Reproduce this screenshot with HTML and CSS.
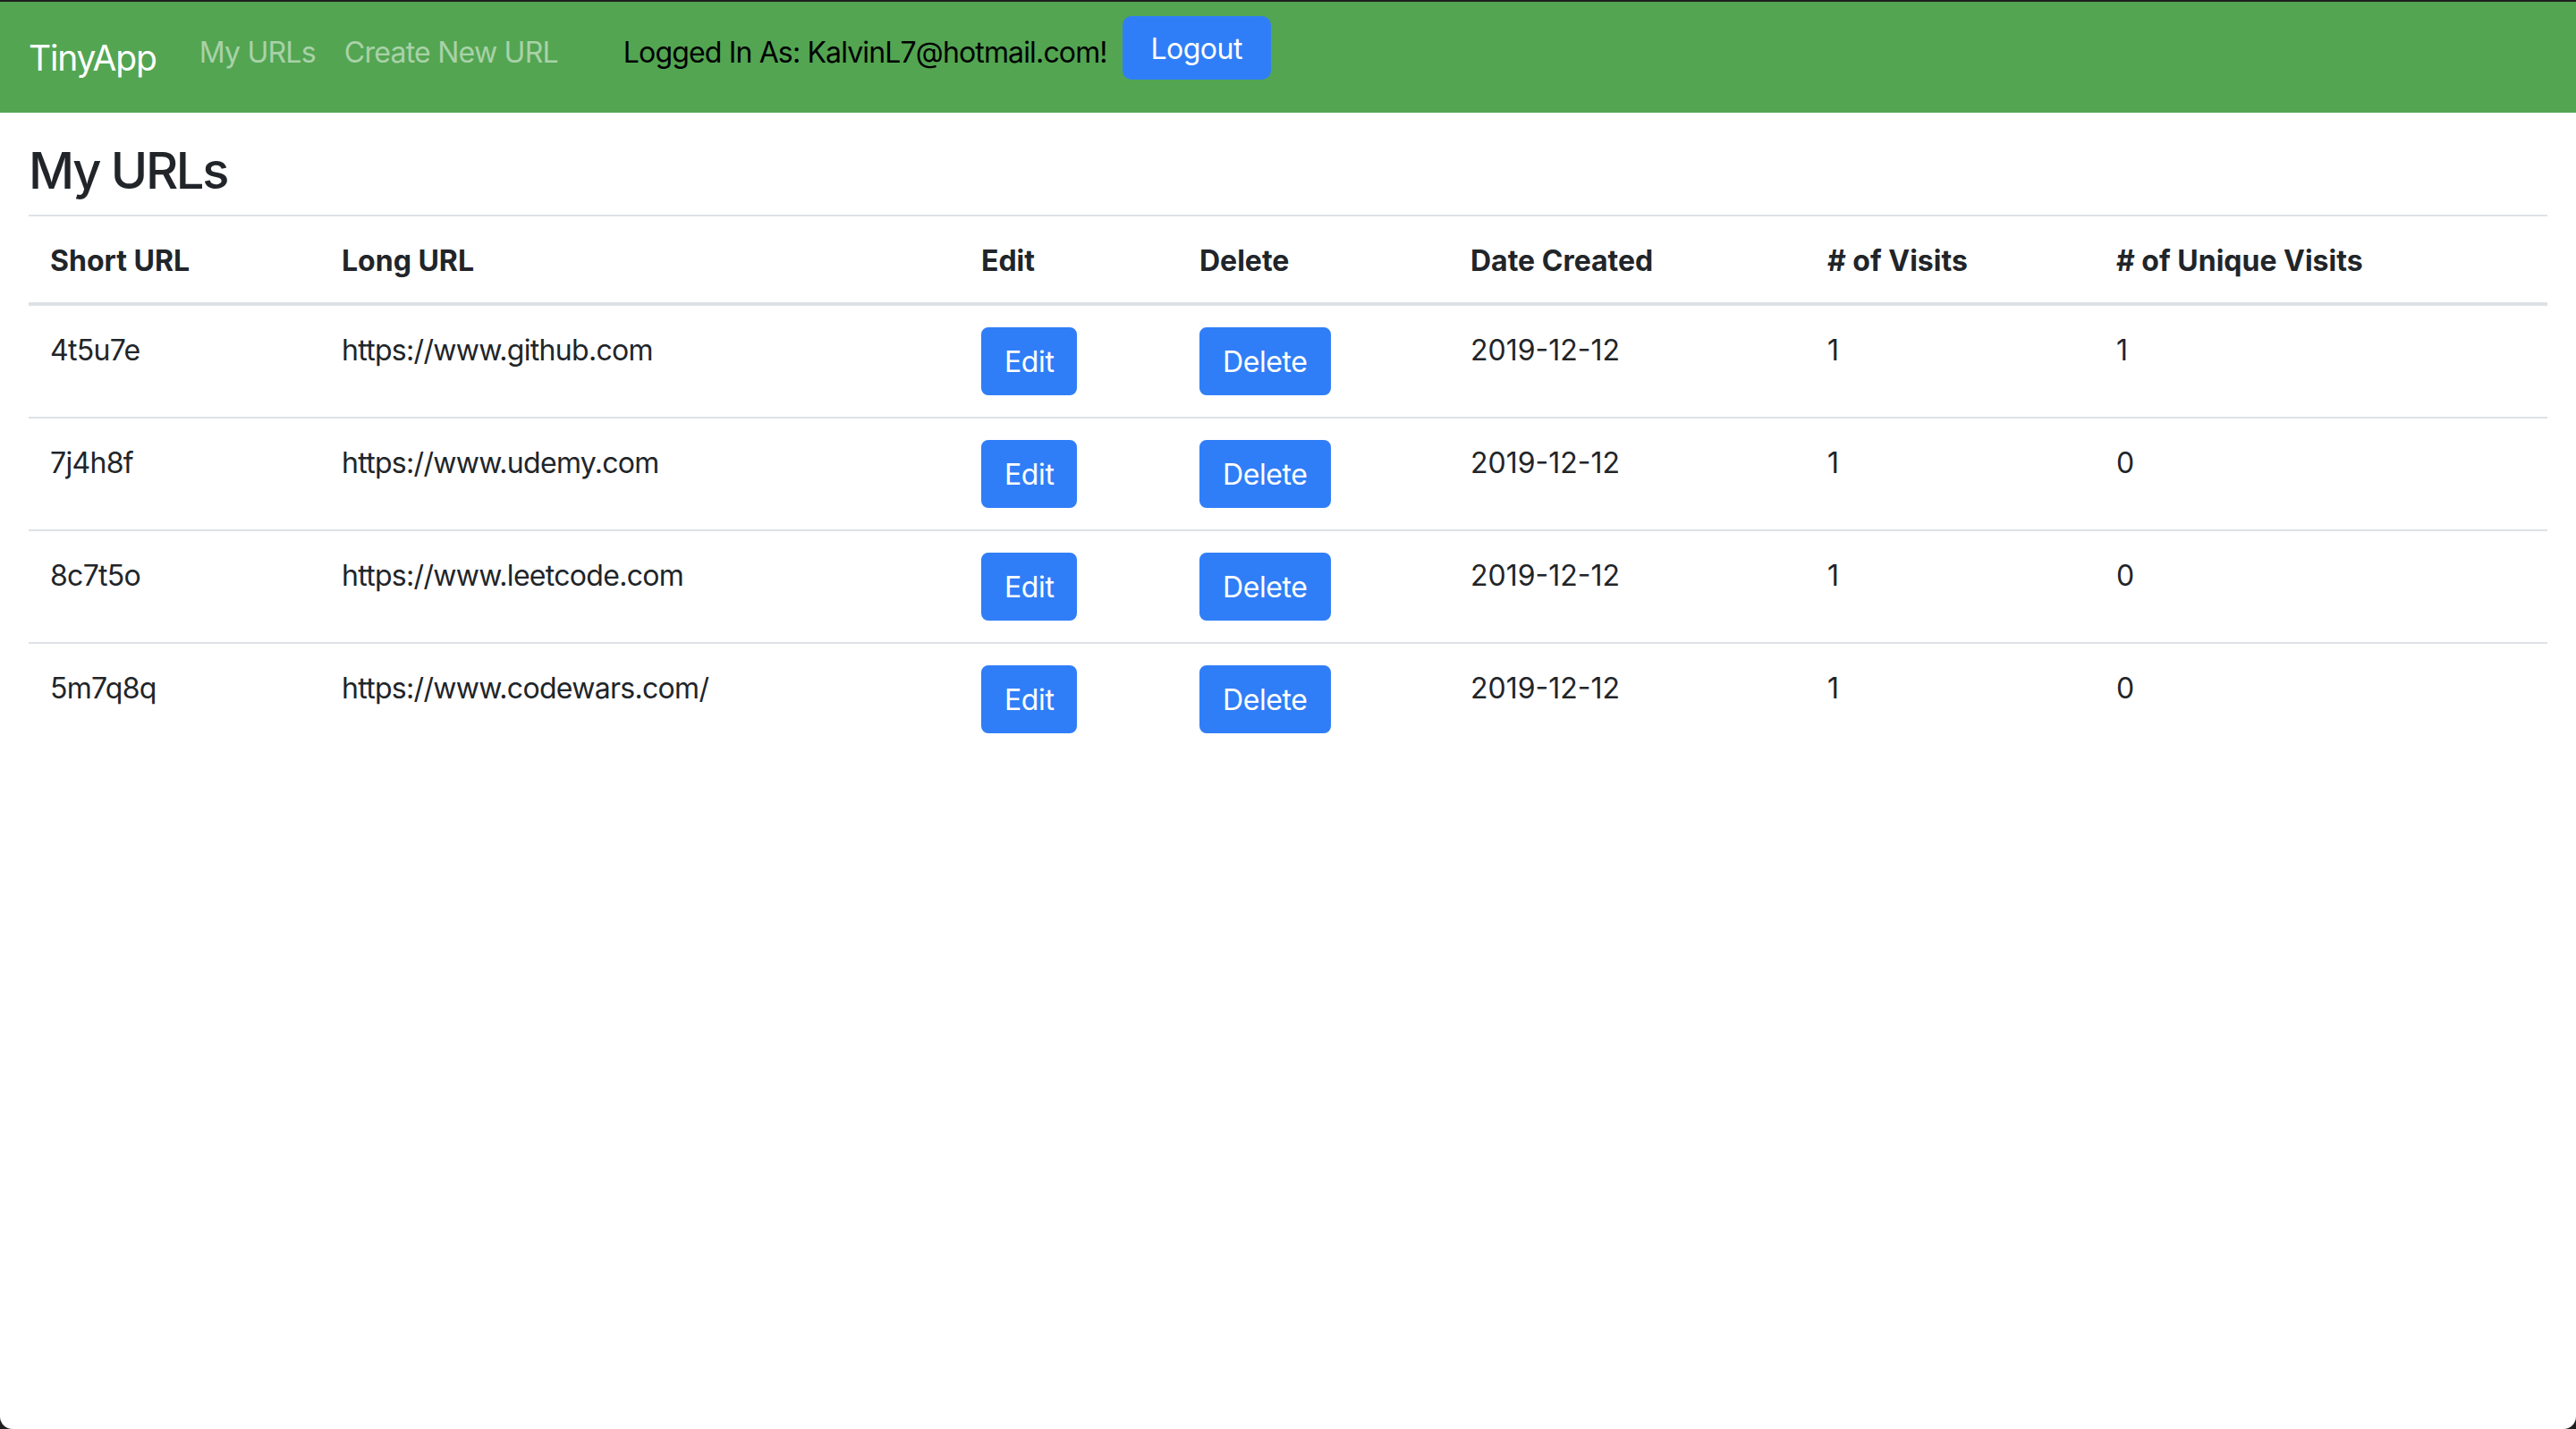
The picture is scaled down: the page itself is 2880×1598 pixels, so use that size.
FILE: index.html
```html
<!DOCTYPE html>
<html lang="en">
<head>
<meta charset="utf-8">
<title>TinyApp</title>
<link rel="stylesheet" href="styles.css">
</head>
<body>
<div class="window">
  <nav class="navbar">
    <a class="brand" href="#">TinyApp</a>
    <a class="nav-link" href="#">My URLs</a>
    <a class="nav-link" href="#">Create New URL</a>
    <span class="logged">Logged In As: KalvinL7@hotmail.com!</span>
    <button class="logout" type="button">Logout</button>
  </nav>
  <main class="container">
    <h3 class="title">My URLs</h3>
    <table class="table">
      <colgroup>
        <col class="c-short">
        <col class="c-long">
        <col class="c-edit">
        <col class="c-delete">
        <col class="c-date">
        <col class="c-visits">
        <col class="c-unique">
      </colgroup>
      <thead>
        <tr>
          <th>Short URL</th>
          <th>Long URL</th>
          <th>Edit</th>
          <th>Delete</th>
          <th>Date Created</th>
          <th># of Visits</th>
          <th># of Unique Visits</th>
        </tr>
      </thead>
      <tbody>
        <tr>
          <td class="txt">4t5u7e</td>
          <td class="txt">https://www.github.com</td>
          <td class="act"><button class="btn" type="button">Edit</button></td>
          <td class="act"><button class="btn" type="button">Delete</button></td>
          <td>2019-12-12</td>
          <td>1</td>
          <td>1</td>
        </tr>
        <tr>
          <td class="txt">7j4h8f</td>
          <td class="txt">https://www.udemy.com</td>
          <td class="act"><button class="btn" type="button">Edit</button></td>
          <td class="act"><button class="btn" type="button">Delete</button></td>
          <td>2019-12-12</td>
          <td>1</td>
          <td>0</td>
        </tr>
        <tr>
          <td class="txt">8c7t5o</td>
          <td class="txt">https://www.leetcode.com</td>
          <td class="act"><button class="btn" type="button">Edit</button></td>
          <td class="act"><button class="btn" type="button">Delete</button></td>
          <td>2019-12-12</td>
          <td>1</td>
          <td>0</td>
        </tr>
        <tr>
          <td class="txt">5m7q8q</td>
          <td class="txt">https://www.codewars.com/</td>
          <td class="act"><button class="btn" type="button">Edit</button></td>
          <td class="act"><button class="btn" type="button">Delete</button></td>
          <td>2019-12-12</td>
          <td>1</td>
          <td>0</td>
        </tr>
      </tbody>
    </table>
  </main>
</div>
</body>
</html>
```

FILE: styles.css
```css
html {
  background: #1f1f1f;
  height: 100%;
}
body {
  margin: 0;
  padding-top: 2px;
  height: 100%;
  box-sizing: border-box;
  font-family: Inter, "Liberation Sans", Arial, sans-serif;
  color: #212529;
}
.window {
  background: #ffffff;
  height: 100%;
  border-radius: 0 0 14px 14px;
  overflow: hidden;
}
.navbar {
  display: flex;
  align-items: flex-start;
  height: 124px;
  box-sizing: border-box;
  padding: 16px 32px 0 32px;
  background: #53a552;
}
.brand {
  font-size: 39px;
  line-height: 60px;
  letter-spacing: -1.2px;
  margin-top: 17px;
  margin-right: 32px;
  color: #ffffff;
  text-decoration: none;
}
.nav-link {
  font-size: 32px;
  line-height: 48px;
  letter-spacing: -0.75px;
  margin-top: 17px;
  padding: 0 16px;
  color: rgba(255, 255, 255, 0.5);
  text-decoration: none;
}
.logged {
  font-size: 32px;
  line-height: 48px;
  letter-spacing: -0.85px;
  margin-top: 17px;
  margin-left: 57px;
  color: #000000;
}
.logout {
  margin-left: 17px;
  width: 166px;
  height: 71px;
  border: none;
  border-radius: 10px;
  background: #307ef7;
  color: #ffffff;
  font-family: inherit;
  font-size: 32px;
  line-height: 48px;
  letter-spacing: -0.5px;
  padding: 2px 0 0 0;
}
.container {
  padding: 0 32px;
}
.title {
  margin: 32px 0 15px 0;
  font-size: 56px;
  line-height: 1.2;
  font-weight: 500;
  letter-spacing: -2.3px;
}
.table {
  width: 100%;
  table-layout: fixed;
  border-collapse: collapse;
  font-size: 32px;
  line-height: 48px;
}
.c-short { width: 326px; }
.c-long { width: 715px; }
.c-edit { width: 244px; }
.c-delete { width: 303px; }
.c-date { width: 399px; }
.c-visits { width: 323px; }
.c-unique { width: 506px; }
.table th {
  text-align: left;
  font-weight: 700;
  padding: 26px 24px 22px 24px;
  vertical-align: bottom;
  border-top: 2px solid #dee2e6;
  border-bottom: 4px solid #dee2e6;
}
.table td {
  padding: 26px 24px 22px 24px;
  vertical-align: top;
  border-top: 2px solid #dee2e6;
}
.table td.act {
  padding: 24px;
}
.table td.txt {
  letter-spacing: -0.7px;
}
.table tbody tr:first-child td {
  border-top: none;
}
.btn {
  display: inline-block;
  padding: 13px 24px 11px 24px;
  font-family: inherit;
  font-size: 32px;
  line-height: 48px;
  letter-spacing: -0.4px;
  color: #ffffff;
  background: #307ef7;
  border: 2px solid #307ef7;
  border-radius: 8px;
}
```
